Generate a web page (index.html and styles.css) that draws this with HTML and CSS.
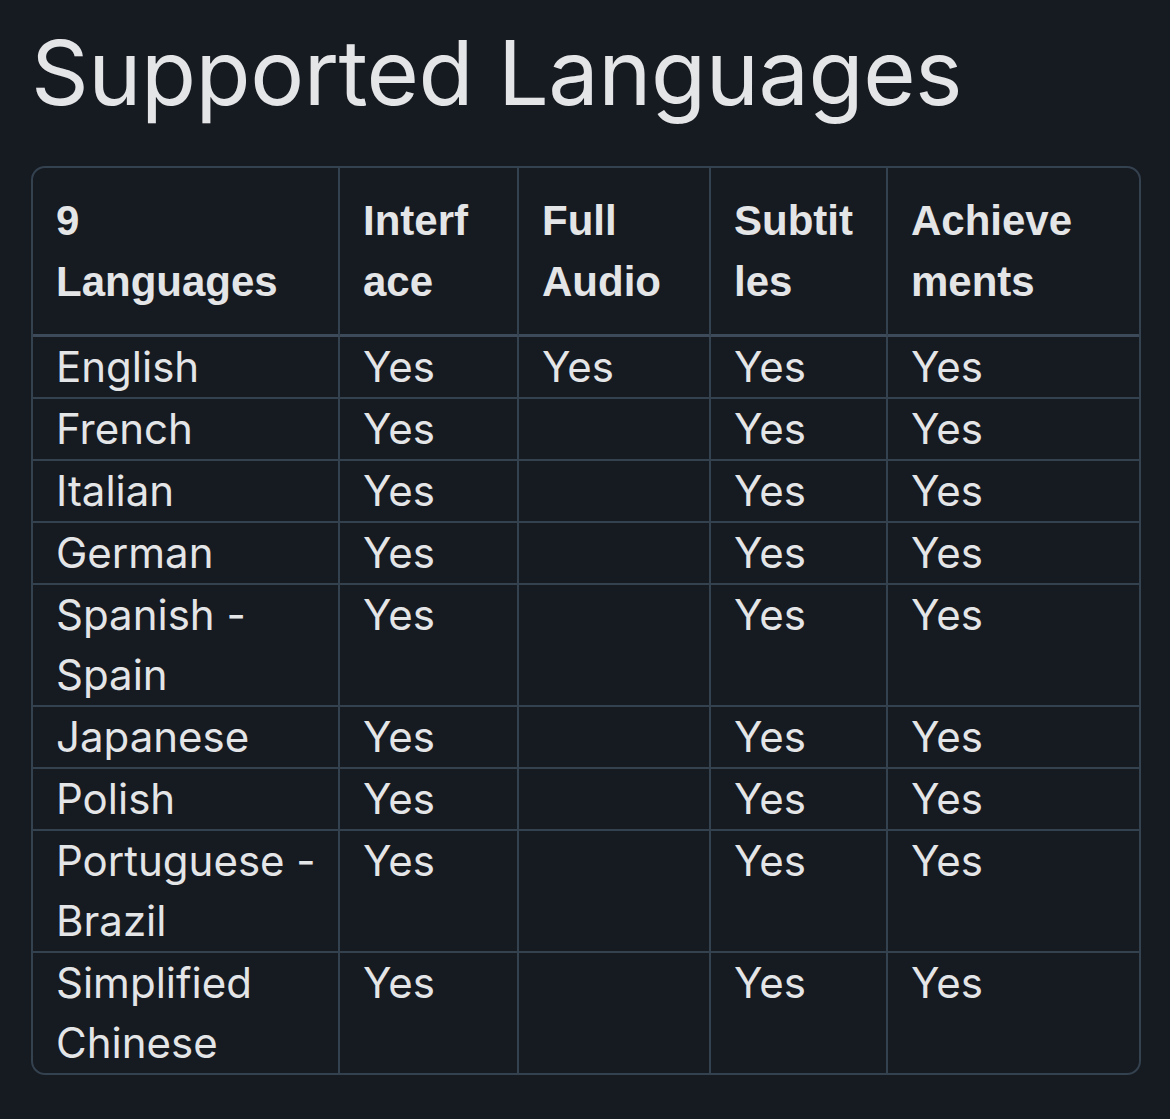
FILE: index.html
```html
<!DOCTYPE html>
<html lang="en">
<head>
  <meta charset="UTF-8" />
  <meta name="viewport" content="width=device-width, initial-scale=1.0" />
  <title>Supported Languages</title>
  <link rel="stylesheet" href="styles.css">
</head>
<body>
  <h1 class="title">Supported Languages</h1>
  <table class="langs">
    <colgroup>
      <col class="c-name"><col class="c-ui"><col class="c-audio"><col class="c-subs"><col class="c-ach">
    </colgroup>
    <thead>
      <tr>
        <th>9<br>Languages</th>
        <th>Interf<br>ace</th>
        <th>Full<br>Audio</th>
        <th>Subtit<br>les</th>
        <th>Achieve<br>ments</th>
      </tr>
    </thead>
    <tbody>
      <tr><td>English</td><td>Yes</td><td>Yes</td><td>Yes</td><td>Yes</td></tr>
      <tr><td>French</td><td>Yes</td><td></td><td>Yes</td><td>Yes</td></tr>
      <tr><td>Italian</td><td>Yes</td><td></td><td>Yes</td><td>Yes</td></tr>
      <tr><td>German</td><td>Yes</td><td></td><td>Yes</td><td>Yes</td></tr>
      <tr><td>Spanish -<br>Spain</td><td>Yes</td><td></td><td>Yes</td><td>Yes</td></tr>
      <tr><td>Japanese</td><td>Yes</td><td></td><td>Yes</td><td>Yes</td></tr>
      <tr><td>Polish</td><td>Yes</td><td></td><td>Yes</td><td>Yes</td></tr>
      <tr><td>Portuguese -<br>Brazil</td><td>Yes</td><td></td><td>Yes</td><td>Yes</td></tr>
      <tr><td>Simplified<br>Chinese</td><td>Yes</td><td></td><td>Yes</td><td>Yes</td></tr>
    </tbody>
  </table>
</body>
</html>
```

FILE: styles.css
```css
body {
  margin: 0;
  padding: 0 29px 0 31px;
  background: #161a21;
  color: #e4e5e7;
  font-family: Inter, "Noto Sans", sans-serif;
}

.title {
  margin: 18px 0 0 0;
  font-size: 90px;
  font-weight: 400;
  line-height: 110px;
  letter-spacing: -0.5px;
}

.langs {
  margin-top: 38px;
  width: 1110px;
  table-layout: fixed;
  border-collapse: separate;
  border-spacing: 0;
  border: 2px solid #34414f;
  border-radius: 14px;
}

.c-name { width: 307px; }
.c-ui { width: 179px; }
.c-audio { width: 192px; }
.c-subs { width: 177px; }
.c-ach { width: 251px; }

.langs th,
.langs td {
  text-align: left;
  vertical-align: top;
  white-space: nowrap;
  border-right: 2px solid #34414f;
  border-bottom: 2px solid #34414f;
  padding: 0 8px 0 23px;
}

.langs th:last-child,
.langs td:last-child {
  border-right: none;
}

.langs tbody tr:last-child td {
  border-bottom: none;
}

.langs th {
  font-family: "Liberation Sans", Arial, sans-serif;
  font-weight: 700;
  font-size: 42px;
  line-height: 61px;
  padding-top: 22px;
  padding-bottom: 22px;
  border-bottom: 3px solid #3c4a5a;
}

.langs td {
  font-size: 42px;
  line-height: 60px;
}
```
